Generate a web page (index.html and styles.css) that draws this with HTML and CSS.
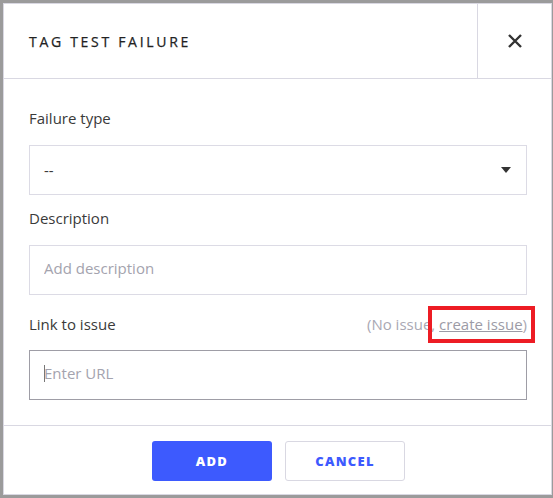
FILE: index.html
```html
<!DOCTYPE html>
<html lang="en">
<head>
    <meta charset="UTF-8">
    <title>Tag test failure</title>
    <link rel="stylesheet" href="styles.css">
</head>
<body>
    <div class="modal">
        <div class="modal-header">
            <h2 class="modal-title">TAG TEST FAILURE</h2>
            <button class="close-btn" aria-label="Close">
                <svg width="16" height="16" viewBox="0 0 16 16">
                    <path d="M2 2 L14 14 M14 2 L2 14" stroke="#333" stroke-width="2.4" fill="none"/>
                </svg>
            </button>
        </div>

        <div class="modal-body">
            <div class="field-label">Failure type</div>
            <div class="select-box">
                <span>--</span>
                <svg class="caret" width="10" height="6" viewBox="0 0 10 6">
                    <path d="M0 0 H10 L5 6 Z" fill="#333"/>
                </svg>
            </div>

            <div class="field-label">Description</div>
            <input class="text-input" type="text" placeholder="Add description">

            <div class="link-row">
                <span class="field-label">Link to issue</span>
                <span class="issue-note">(No issue, <span class="marked"><a href="#">create issue</a>)</span></span>
            </div>
            <div class="url-wrap">
                <input class="text-input focused" type="text" placeholder="Enter URL">
            </div>
        </div>

        <div class="modal-footer">
            <button class="btn btn-primary">ADD</button>
            <button class="btn btn-outline">CANCEL</button>
        </div>
    </div>
</body>
</html>
```

FILE: styles.css
```css
body {
    margin: 0;
    padding: 3px 1px 3px 3px;
    background: #9b9b9b;
    font-family: "Open Sans", Arial, sans-serif;
    color: #3a3a3a;
}
.modal {
    background: white;
    border: 1px solid #d9d8e2;
    height: 490px;
    display: flex;
    flex-direction: column;
}
.modal-header {
    display: flex;
    height: 74px;
    border-bottom: 1px solid #d9d8e2;
}
.modal-title {
    flex: 1;
    margin: 0;
    padding-left: 25px;
    font-size: 14px;
    font-weight: 400;
    letter-spacing: 2.7px;
    line-height: 76px;
    color: #222;
    -webkit-text-stroke: 0.25px #222;
}
.close-btn {
    width: 74px;
    border: none;
    border-left: 1px solid #d9d8e2;
    background: none;
    display: flex;
    align-items: center;
    justify-content: center;
    padding: 0;
}
.modal-body {
    padding: 29px 24px 25px 25px;
}
.field-label {
    display: block;
    font-size: 15px;
    line-height: 20px;
    margin-bottom: 17px;
    color: #3a3a3a;
}
.select-box, .text-input {
    box-sizing: border-box;
    width: 100%;
    height: 50px;
    border: 1px solid #dcdbe5;
    padding: 0 14px;
    font-family: inherit;
    font-size: 15px;
    color: #3a3a3a;
    margin: 0;
    display: flex;
    align-items: center;
    outline: none;
    caret-color: transparent;
}
.text-input {
    padding-bottom: 4px;
}
.select-box {
    justify-content: space-between;
    margin-bottom: 13px;
}
.select-box .caret {
    margin-right: 1px;
}
.text-input::placeholder {
    color: #a4a3ae;
}
.text-input.focused {
    border-color: #9e9da6;
}
.link-row {
    display: flex;
    justify-content: space-between;
    margin-top: 19px;
    margin-bottom: 16px;
}
.link-row .field-label {
    margin-bottom: 0;
}
.issue-note {
    font-size: 15px;
    line-height: 20px;
    color: #a9a8b3;
}
.issue-note a {
    color: #9c9ba6;
}
.marked {
    position: relative;
}
.marked::after {
    content: "";
    position: absolute;
    left: -11px;
    right: -8px;
    top: -8px;
    bottom: -9px;
    border: 4px solid #ed1c24;
}
.url-wrap {
    position: relative;
}
.url-wrap::before {
    content: "";
    position: absolute;
    left: 15px;
    top: 15px;
    height: 17px;
    border-left: 1px solid #777;
}
.modal-footer {
    margin-top: auto;
    border-top: 1px solid #d9d8e2;
    display: flex;
    justify-content: center;
    gap: 13px;
    padding: 15px 0 13px 2px;
}
.btn {
    width: 120px;
    height: 40px;
    border-radius: 3px;
    font-family: inherit;
    font-size: 13px;
    font-weight: 800;
    letter-spacing: 1.3px;
    cursor: pointer;
}
.btn-primary {
    background: #3d5afe;
    border: none;
    color: white;
}
.btn-outline {
    background: white;
    border: 1px solid #d9d8e2;
    color: #3d5afe;
}
```
